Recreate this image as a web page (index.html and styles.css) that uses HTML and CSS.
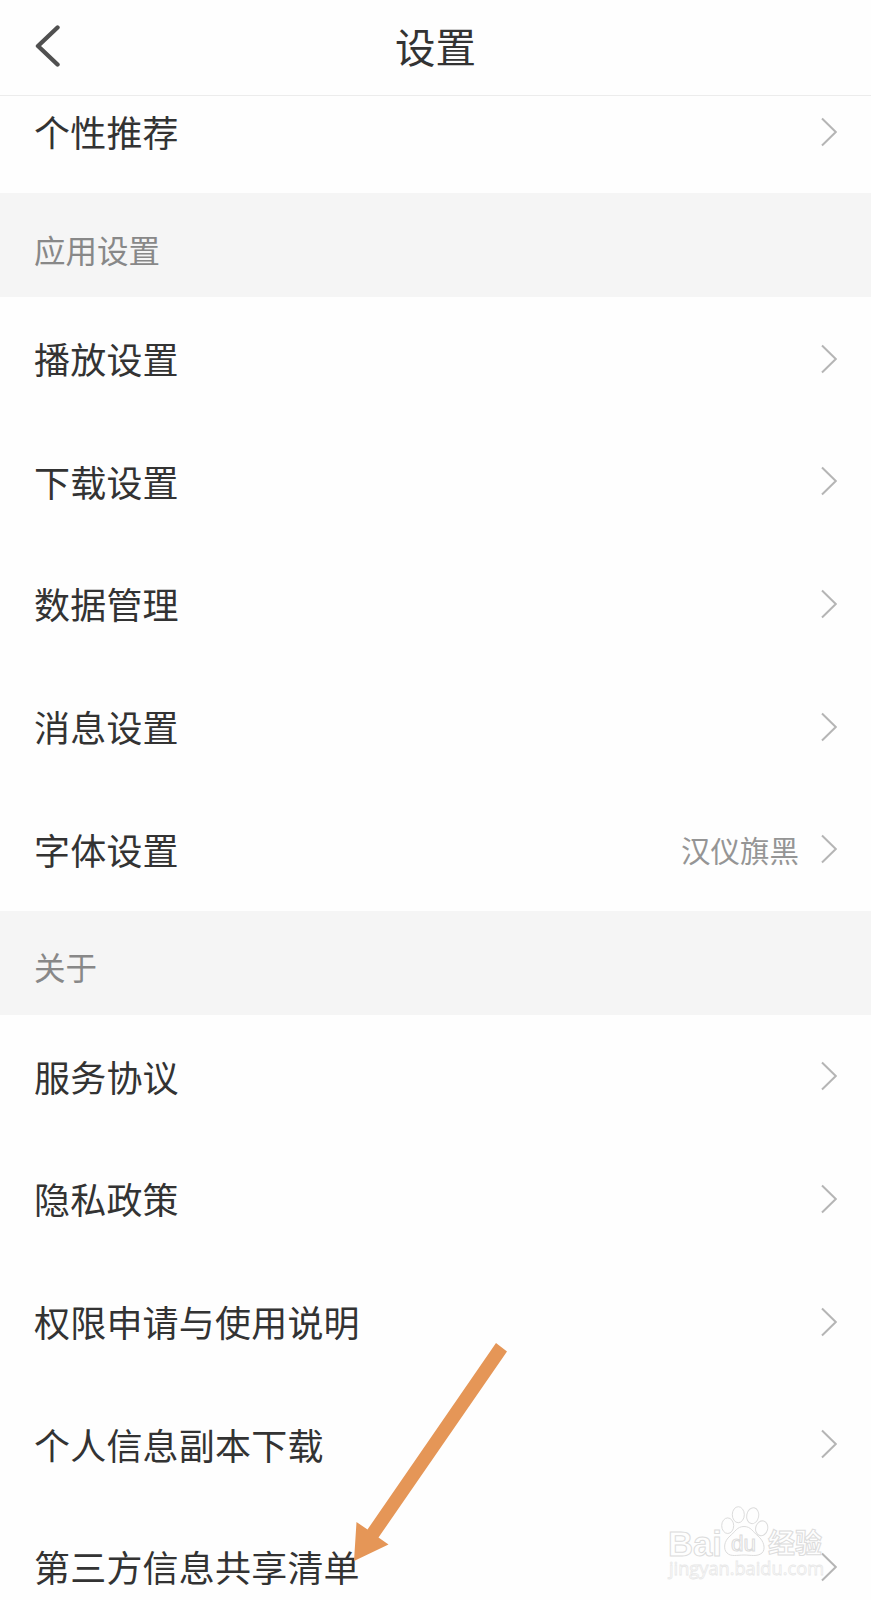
FILE: index.html
```html
<!DOCTYPE html>
<html lang="zh-CN">
<head>
    <meta charset="UTF-8">
    <title>设置</title>
    <link rel="stylesheet" href="styles.css">
</head>
<body>
    <svg class="defs" width="0" height="0">
        <symbol id="chevron" viewBox="0 0 16 30">
            <path d="M1 1.5L14.8 15L1 28.5" fill="none" stroke="#b5b5b5" stroke-width="2" />
        </symbol>
    </svg>

    <header class="header">
        <svg class="back" viewBox="0 0 26 42">
            <path d="M22.5 2.5L3 21L22.5 39.5" fill="none" stroke="#505050" stroke-width="4.4" stroke-linecap="round" stroke-linejoin="round" />
        </svg>
        <h1 class="title">设置</h1>
    </header>

    <main class="settings">
        <div class="row"><span class="label">个性推荐</span><svg class="chevron"><use href="#chevron" /></svg></div>

        <h2 class="section-title">应用设置</h2>
        <div class="row"><span class="label">播放设置</span><svg class="chevron"><use href="#chevron" /></svg></div>
        <div class="row"><span class="label">下载设置</span><svg class="chevron"><use href="#chevron" /></svg></div>
        <div class="row"><span class="label">数据管理</span><svg class="chevron"><use href="#chevron" /></svg></div>
        <div class="row"><span class="label">消息设置</span><svg class="chevron"><use href="#chevron" /></svg></div>
        <div class="row"><span class="label">字体设置</span><span class="value">汉仪旗黑</span><svg class="chevron"><use href="#chevron" /></svg></div>

        <h2 class="section-title">关于</h2>
        <div class="row"><span class="label">服务协议</span><svg class="chevron"><use href="#chevron" /></svg></div>
        <div class="row"><span class="label">隐私政策</span><svg class="chevron"><use href="#chevron" /></svg></div>
        <div class="row"><span class="label">权限申请与使用说明</span><svg class="chevron"><use href="#chevron" /></svg></div>
        <div class="row"><span class="label">个人信息副本下载</span><svg class="chevron"><use href="#chevron" /></svg></div>
        <div class="row"><span class="label">第三方信息共享清单</span><svg class="chevron"><use href="#chevron" /></svg></div>
    </main>

    <svg class="arrow" viewBox="0 0 154 219">
        <path d="M142 0L153 8.5L24.5 194.5L34.5 201.5L0 218L2.5 179L13.5 186.5Z" fill="#e59657" />
    </svg>

    <svg class="watermark" viewBox="0 0 160 86">
        <g class="watermark-outline">
            <text class="watermark-bai" x="1" y="49.5" textLength="54" lengthAdjust="spacingAndGlyphs">Bai</text>
            <ellipse cx="60.7" cy="19.7" rx="6" ry="7.8" />
            <ellipse cx="71.3" cy="8.7" rx="6" ry="8" />
            <ellipse cx="85.7" cy="9.7" rx="6" ry="8" transform="rotate(10 85.7 9.7)" />
            <ellipse cx="94.7" cy="22.3" rx="6" ry="7.5" transform="rotate(15 94.7 22.3)" />
            <path d="M77 20.5C70 20.5 68 26 63 30C57 35 56 43 60 47C64 51 70 49 77 49C84 49 90 51 95 47C99 43 97 35 91 30C86 26 84 20.5 77 20.5Z" />
            <text class="watermark-du" x="64" y="44.5" textLength="25" lengthAdjust="spacingAndGlyphs">du</text>
            <text class="watermark-cn" x="101" y="46.5" textLength="54" lengthAdjust="spacingAndGlyphs">经验</text>
            <text class="watermark-url" x="2" y="68.5" textLength="155" lengthAdjust="spacingAndGlyphs">jingyan.baidu.com</text>
        </g>
    </svg>
</body>
</html>
```
FILE: styles.css
```css
body {
    font-family: "Noto Sans CJK SC", sans-serif;
    margin: 0;
    height: 1600px;
    overflow: hidden;
    position: relative;
    background: #fefefe;
    color: #333;
}
.defs {
    display: block;
}
.header {
    display: grid;
    grid-template-columns: 60px 1fr 60px;
    align-items: center;
    box-sizing: border-box;
    height: 96px;
    padding: 0 0 4px;
    border-bottom: 1px solid #ececec;
    background: #fefefe;
    position: relative;
    z-index: 1;
}
.back {
    width: 26px;
    height: 42px;
    margin-left: 35px;
}
.title {
    margin: 0;
    font-size: 40.5px;
    font-weight: 400;
    line-height: 60px;
    text-align: center;
}
/* the list is scrolled a little under the header */
.settings {
    margin-top: -25.7px;
}
.row {
    display: flex;
    align-items: center;
    box-sizing: border-box;
    height: 122.7px;
    padding: 0 34px;
}
.label {
    flex: 1;
    padding-bottom: 1px;
    font-size: 36px;
    letter-spacing: 0.2px;
}
.value {
    margin-right: 22px;
    padding-bottom: 1px;
    font-size: 29.5px;
    color: #959595;
}
.chevron {
    width: 16px;
    height: 30px;
}
.section-title {
    display: flex;
    align-items: center;
    box-sizing: border-box;
    height: 104.2px;
    margin: 0;
    padding: 7px 34px 0;
    background: #f5f5f5;
    color: #888;
    font-size: 31.5px;
    font-weight: 400;
}
.arrow {
    position: absolute;
    left: 354px;
    top: 1343px;
    width: 154px;
    height: 219px;
}
.watermark {
    position: absolute;
    left: 667px;
    top: 1506px;
    width: 160px;
    height: 86px;
}
.watermark-outline {
    fill: #fefefe;
    fill-opacity: 0.6;
    stroke: #dcdcdc;
    stroke-width: 1;
}
.watermark-bai {
    font: 700 35px "Liberation Sans", sans-serif;
}
.watermark-du {
    font: 400 22px "Liberation Sans", sans-serif;
}
.watermark-cn {
    font: 700 27px "Noto Sans CJK SC", sans-serif;
}
.watermark-url {
    font: 400 19px "Open Sans", sans-serif;
    stroke: #e8e8e8;
    stroke-width: 0.8;
}
```
